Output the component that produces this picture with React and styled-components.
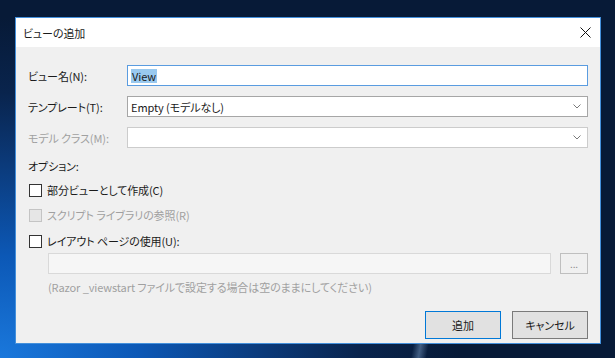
import React from "react";
import styled, { createGlobalStyle } from "styled-components";

const Global = createGlobalStyle`
  html, body { margin: 0; padding: 0; }
  body {
    width: 615px; height: 358px; overflow: hidden;
    font-family: "Noto Sans CJK JP", "Noto Sans", sans-serif;
  }
`;

const Desktop = styled.div`
  width: 615px;
  height: 358px;
  box-sizing: border-box;
  padding: 17px 0 0 15px;
  background:
    linear-gradient(100deg, rgba(255,255,255,0) 67%, rgba(170,210,255,0.35) 68.2%, rgba(255,255,255,0) 69.5%) bottom / 100% 20px no-repeat,
    radial-gradient(ellipse 75% 95% at 0% 100%, #1a78dc 0%, #0c58b6 30%, #0b3978 58%, #09244d 78%, #071a37 100%);
`;

const Window = styled.div`
  width: 586px;
  height: 327px;
  box-sizing: border-box;
  border: 1px solid #4390dc;
  background: #f0f0f0;
  display: flex;
  flex-direction: column;
  font-size: 11px;
  font-weight: 400;
  letter-spacing: -0.1px;
  line-height: 16px;
  color: #1a1a1a;
  font-feature-settings: "palt";
`;

const TitleBar = styled.div`
  height: 29px;
  flex: none;
  background: #fff;
  display: flex;
  align-items: center;
  justify-content: space-between;
  padding-left: 7px;
`;

const Title = styled.span`
  margin-top: 1px;
`;

const CloseButton = styled.div`
  width: 30px;
  height: 29px;
  display: flex;
  align-items: center;
  justify-content: center;
`;

const Body = styled.div`
  flex: 1;
  display: flex;
  flex-direction: column;
  padding: 18px 12px 0 12px;
`;

const FieldRow = styled.div`
  display: grid;
  grid-template-columns: 99px 1fr;
  align-items: center;
  margin-top: ${(p) => p.$mt || 0}px;
`;

const Label = styled.span`
  color: ${(p) => (p.$disabled ? "#a0a0a0" : "inherit")};
`;

const TextInput = styled.div`
  height: 21px;
  box-sizing: border-box;
  border: 1px solid ${(p) => p.$border || "#a6a6a6"};
  background: ${(p) => p.$bg || "#fff"};
  display: flex;
  align-items: center;
  padding: 0 3px;
`;

const Selected = styled.span`
  background: #99c9ef;
  padding: 0 1px;
  line-height: 14px;
`;

const SelectBox = styled(TextInput)`
  justify-content: space-between;
  padding-right: 6px;
`;

const SectionLabel = styled.div`
  margin-top: ${(p) => p.$mt || 0}px;
`;

const CheckRow = styled.div`
  display: flex;
  align-items: center;
  gap: 5px;
  padding-left: 1px;
  margin-top: ${(p) => p.$mt || 0}px;
  color: ${(p) => (p.$disabled ? "#a0a0a0" : "inherit")};
`;

const Box = styled.span`
  width: 13px;
  height: 13px;
  box-sizing: border-box;
  border: 1px solid ${(p) => (p.$disabled ? "#c4c4c4" : "#333")};
  background: ${(p) => (p.$disabled ? "#e6e6e6" : "#fff")};
  flex: none;
`;

const PathRow = styled.div`
  display: flex;
  align-items: center;
  gap: 9px;
  padding-left: 20px;
  margin-top: 4px;
`;

const PathInput = styled.div`
  flex: 1;
  height: 21px;
  box-sizing: border-box;
  border: 1px solid #d9d9d9;
  background: #f6f6f6;
`;

const BrowseButton = styled.div`
  width: 28px;
  height: 21px;
  box-sizing: border-box;
  border: 1px solid #bfbfbf;
  background: #f0f0f0;
  color: #8a8a8a;
  font-size: 10px;
  display: flex;
  align-items: center;
  justify-content: center;
  line-height: 10px;
`;

const Hint = styled.div`
  padding-left: 20px;
  margin-top: 5px;
  color: #a0a0a0;
`;

const ButtonRow = styled.div`
  display: flex;
  justify-content: flex-end;
  gap: 11px;
  margin-top: 16px;
`;

const Button = styled.div`
  width: 76px;
  height: 28px;
  box-sizing: border-box;
  border: 1px solid ${(p) => (p.$default ? "#0078d7" : "#7a7a7a")};
  background: #e1e1e1;
  display: flex;
  align-items: center;
  justify-content: center;
`;

const Chevron = () => (
  <svg width="8" height="5" viewBox="0 0 8 5">
    <polyline points="0.5,0.5 4,4 7.5,0.5" fill="none" stroke="#7a7a7a" strokeWidth="1" />
  </svg>
);

const CloseIcon = () => (
  <svg width="11" height="11" viewBox="0 0 11 11">
    <path d="M0.5 0.5 L10.5 10.5 M10.5 0.5 L0.5 10.5" stroke="#111" strokeWidth="1" />
  </svg>
);

export default function App() {
  return (
    <>
      <Global />
      <Desktop>
        <Window>
          <TitleBar>
            <Title>ビューの追加</Title>
            <CloseButton>
              <CloseIcon />
            </CloseButton>
          </TitleBar>
          <Body>
            <FieldRow>
              <Label>ビュー名(N):</Label>
              <TextInput $border="#5a9ce0">
                <Selected>View</Selected>
              </TextInput>
            </FieldRow>
            <FieldRow $mt={10}>
              <Label>テンプレート(T):</Label>
              <SelectBox>
                <span>Empty (モデルなし)</span>
                <Chevron />
              </SelectBox>
            </FieldRow>
            <FieldRow $mt={10}>
              <Label $disabled>モデル クラス(M):</Label>
              <SelectBox $border="#cccccc">
                <span />
                <Chevron />
              </SelectBox>
            </FieldRow>
            <SectionLabel $mt={10}>オプション:</SectionLabel>
            <CheckRow $mt={8}>
              <Box />
              <span>部分ビューとして作成(C)</span>
            </CheckRow>
            <CheckRow $mt={9} $disabled>
              <Box $disabled />
              <span>スクリプト ライブラリの参照(R)</span>
            </CheckRow>
            <CheckRow $mt={10}>
              <Box />
              <span>レイアウト ページの使用(U):</span>
            </CheckRow>
            <PathRow>
              <PathInput />
              <BrowseButton>...</BrowseButton>
            </PathRow>
            <Hint>(Razor _viewstart ファイルで設定する場合は空のままにしてください)</Hint>
            <ButtonRow>
              <Button $default>追加</Button>
              <Button>キャンセル</Button>
            </ButtonRow>
          </Body>
        </Window>
      </Desktop>
    </>
  );
}
